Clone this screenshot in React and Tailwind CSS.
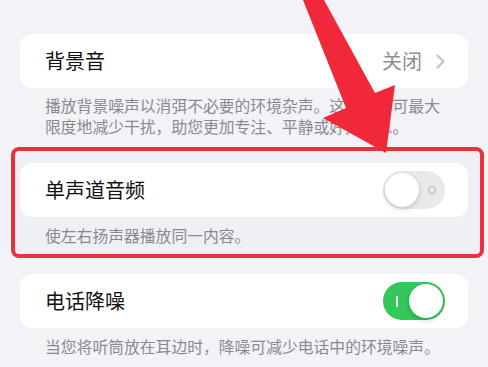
import React from "react";

const Toggle = ({ on }) => {
  if (on) {
    return (
      <div className="relative flex h-[38px] w-[62px] shrink-0 items-center rounded-full bg-[#34c759]">
        <div className="ml-[13px] h-[11px] w-[1.5px] rounded-full bg-white/90"></div>
        <div className="ml-auto mr-[2px] h-[34px] w-[34px] rounded-full bg-white shadow-[0_2px_5px_rgba(0,0,0,0.2)]"></div>
      </div>
    );
  }
  return (
    <div className="flex h-[38px] w-[62px] shrink-0 items-center rounded-full bg-[#e9e9eb]">
      <div className="ml-[2px] h-[34px] w-[34px] rounded-full bg-white shadow-[0_2px_5px_rgba(0,0,0,0.18)]"></div>
      <div className="ml-[9px] h-[8px] w-[8px] rounded-full border-[1.2px] border-[#b3b3b7]"></div>
    </div>
  );
};

const Card = ({ title, children, className = "" }) => (
  <div
    className={`flex h-[54px] w-[448px] items-center justify-between rounded-[12px] bg-white pl-[25px] pr-[23px] ${className}`}
  >
    <span className="text-[20px] leading-none text-[#111]">{title}</span>
    {children}
  </div>
);

const Note = ({ children, className = "" }) => (
  <p className={`w-[448px] pl-[25px] pr-[20px] text-[15.8px] leading-[21px] text-[#8a8a8e] ${className}`}>
    {children}
  </p>
);

export default function App() {
  return (
    <div
      className="relative h-[367px] w-[488px] overflow-hidden bg-[#f2f2f7]"
      style={{ fontFamily: '"Noto Sans CJK SC", "Noto Sans", sans-serif' }}
    >
      <div className="pt-[34px]">
        <Card title="背景音" className="ml-[20px]">
          <div className="flex items-center gap-[14px]">
            <span className="text-[20px] leading-none text-[#8e8e93]">关闭</span>
            <svg width="9" height="15" viewBox="0 0 9 15" fill="none">
              <polyline
                points="1.5,1.5 7.5,7.5 1.5,13.5"
                stroke="#c4c4c8"
                strokeWidth="2.2"
                strokeLinecap="round"
                strokeLinejoin="round"
              />
            </svg>
          </div>
        </Card>
        <Note className="ml-[20px] mt-[7px]">
          播放背景噪声以消弭不必要的环境杂声。这些声音可最大限度地减少干扰，助您更加专注、平静或好好休息。
        </Note>

        <div className="ml-[11px] mt-[10px] w-[473px] rounded-[8px] border-4 border-[#e8333f] bg-[#efeff6] pb-[8px] pl-[5px] pt-[12px]">
          <Card title="单声道音频">
            <Toggle on={false} />
          </Card>
          <Note className="mt-[8px]">使左右扬声器播放同一内容。</Note>
        </div>

        <Card title="电话降噪" className="ml-[20px] mt-[16px]">
          <Toggle on />
        </Card>
        <Note className="ml-[20px] mt-[8px]">
          当您将听筒放在耳边时，降噪可减少电话中的环境噪声。
        </Note>
      </div>

      {/* annotation arrow */}
      <svg
        className="pointer-events-none absolute left-0 top-0"
        width="488"
        height="367"
        viewBox="0 0 488 367"
      >
        <polygon
          points="303,0 324,0 375,93 395,85 386,153 323,118 346,108"
          fill="#f0283a"
        />
      </svg>
    </div>
  );
}
